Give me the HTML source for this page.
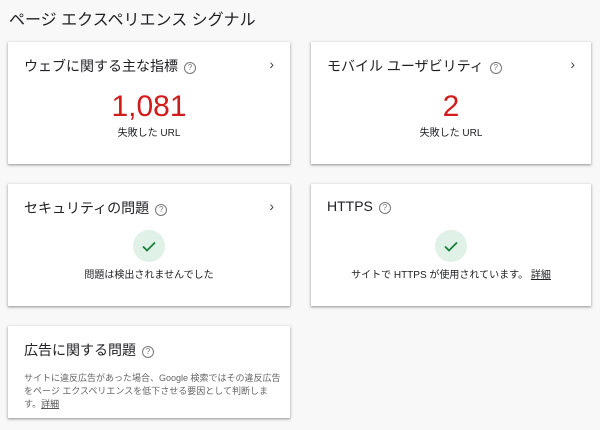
<!DOCTYPE html>
<html><head><meta charset="utf-8"><style>
body{margin:0;width:600px;height:430px;background:#f8f8f8;font-family:"Liberation Sans","Noto Sans CJK JP",sans-serif;color:#202124;position:relative;overflow:hidden}
.h{position:absolute;left:9px;top:6px;font-size:16px}
.c{position:absolute;background:#fff;box-shadow:0 1px 2px rgba(0,0,0,.3),0 1px 3px 1px rgba(0,0,0,.1)}
.t{position:absolute;left:16px;top:14px;font-size:14px}
.q{display:inline-block;width:10px;height:10px;border:1px solid #777;border-radius:50%;font-size:8px;line-height:10px;text-align:center;color:#777;margin-left:6px;vertical-align:1px}
.ar{position:absolute;right:16px;top:14px;font-size:14px;color:#444}
.n{position:absolute;left:0;right:0;top:48px;text-align:center;color:#d21c1c;font-size:30px}
.s{position:absolute;left:0;right:0;text-align:center;font-size:10px}
.ck{position:absolute;width:32px;height:32px;border-radius:50%;background:#e0f1e8;left:50%;margin-left:-16px;top:46px}
u{color:#202124}
</style></head><body>
<div class="h">ページ エクスペリエンス シグナル</div>
<div class="c" style="left:8px;top:42px;width:282px;height:122px"><div class="t">ウェブに関する主な指標<span class="q">?</span></div><div class="ar">›</div><div class="n">1,081</div><div class="s" style="top:82px">失敗した URL</div></div>
<div class="c" style="left:311px;top:42px;width:280px;height:122px"><div class="t">モバイル ユーザビリティ<span class="q">?</span></div><div class="ar">›</div><div class="n">2</div><div class="s" style="top:82px">失敗した URL</div></div>
<div class="c" style="left:8px;top:184px;width:282px;height:122px"><div class="t">セキュリティの問題<span class="q">?</span></div><div class="ar">›</div><div class="ck"><svg width="32" height="32"><path d="M10 16.5l4 4 8-8" stroke="#188038" stroke-width="1.8" fill="none"/></svg></div><div class="s" style="top:82px">問題は検出されませんでした</div></div>
<div class="c" style="left:311px;top:184px;width:280px;height:122px"><div class="t">HTTPS<span class="q">?</span></div><div class="ck"><svg width="32" height="32"><path d="M10 16.5l4 4 8-8" stroke="#188038" stroke-width="1.8" fill="none"/></svg></div><div class="s" style="top:82px">サイトで HTTPS が使用されています。 <u>詳細</u></div></div>
<div class="c" style="left:8px;top:326px;width:282px;height:92px"><div class="t">広告に関する問題<span class="q">?</span></div><div style="position:absolute;left:16px;top:46px;width:270px;white-space:nowrap;font-size:9px;line-height:13px;color:#666">サイトに違反広告があった場合、Google 検索ではその違反広告<br>をページ エクスペリエンスを低下させる要因として判断しま<br>す。<u style="color:#555">詳細</u></div></div>
</body></html>
